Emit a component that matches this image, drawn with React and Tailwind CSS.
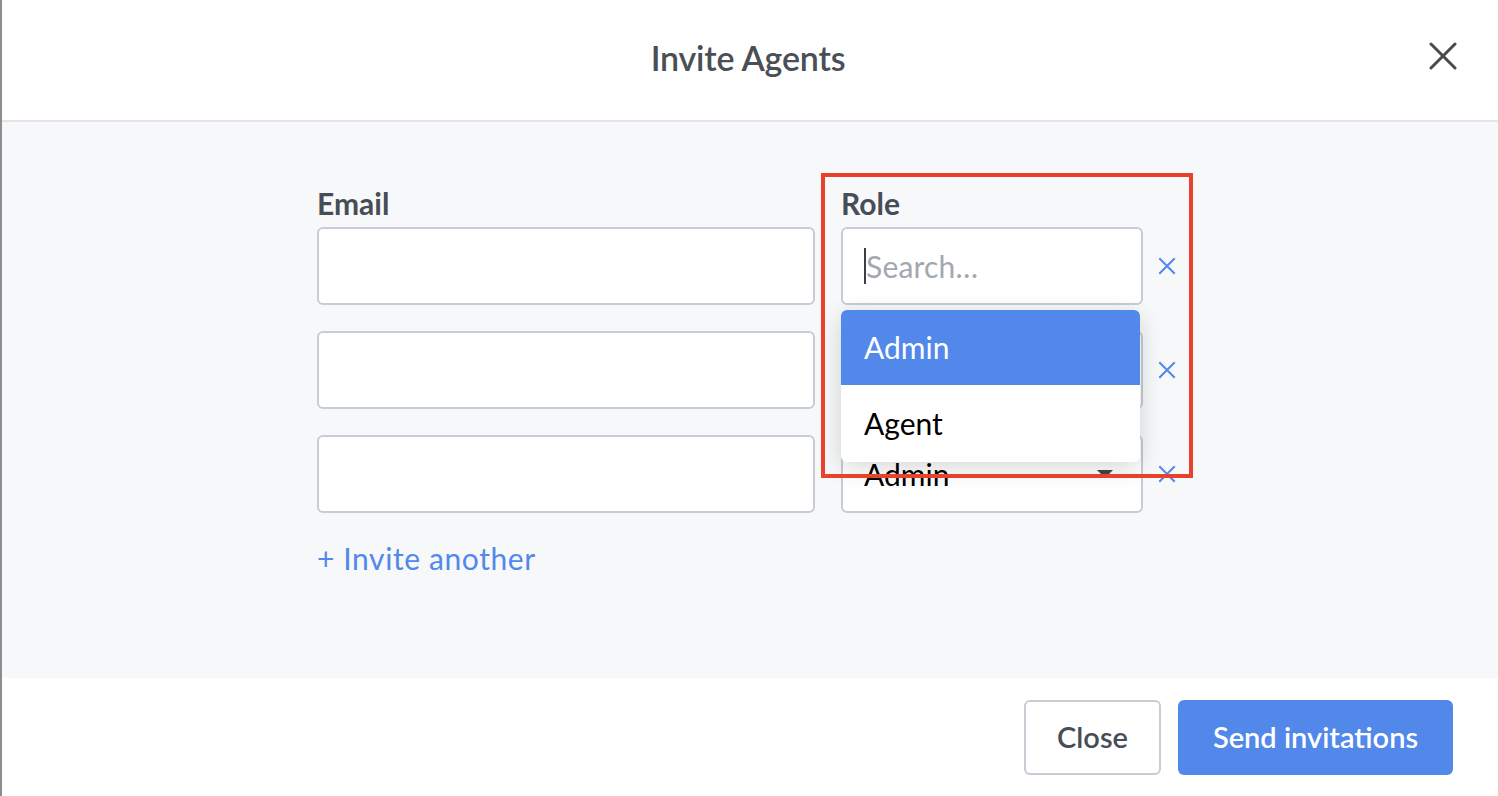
import React from 'react';

const XSmall = () => (
  <svg width="18" height="18" viewBox="0 0 18 18" className="shrink-0">
    <path d="M2 2 L16 16 M16 2 L2 16" stroke="#5288ea" strokeWidth="2" strokeLinecap="square" />
  </svg>
);

const Caret = () => (
  <svg width="16" height="8" viewBox="0 0 16 8">
    <path d="M0 0 H16 L8 8 Z" fill="#3f454d" />
  </svg>
);

const App = () => {
  const rows = [0, 1, 2];

  return (
    <div className="relative w-[1498px] h-[796px] flex flex-col bg-white border-l-2 border-[#8d8d8d] font-['Lato',sans-serif] overflow-hidden">
      <header className="relative h-[122px] shrink-0 flex items-center justify-center border-b-2 border-[#e1e4e8]">
        <h1 className="text-[34px] font-semibold text-[#4a4f57] tracking-[-0.2px] -mt-[6px] pr-[4px]">Invite Agents</h1>
        <button className="absolute right-[41px] top-[42px] p-0">
          <svg width="28" height="28" viewBox="0 0 28 28">
            <path d="M2 2 L26 26 M26 2 L2 26" stroke="#4a4a4a" strokeWidth="3" strokeLinecap="round" />
          </svg>
        </button>
      </header>

      <main className="flex-1 bg-[#f7f8fa] pl-[315px] pt-[64px]">
        <div className="flex gap-[26px]">
          <div className="w-[498px] flex flex-col">
            <label className="text-[30px] font-bold text-[#474d56] leading-[34px] mb-[7px]">Email</label>
            <div className="flex flex-col gap-[26px]">
              {rows.map((r) => (
                <input key={r} className="h-[78px] w-full bg-white border-2 border-[#c6cdd5] rounded-[6px] outline-none" />
              ))}
            </div>
          </div>

          <div className="flex flex-col">
            <label className="text-[30px] font-bold text-[#474d56] leading-[34px] mb-[7px]">Role</label>
            <div className="flex flex-col gap-[26px]">
              {rows.map((r) => (
                <div key={r} className="flex items-center gap-[15px]">
                  <div className="relative w-[302px] h-[78px] bg-white border-2 border-[#c6cdd5] rounded-[6px] flex items-center pl-[21px] pr-[28px]">
                    {r === 0 && (
                      <>
                        <span className="w-[2px] h-[36px] bg-[#3a3f46]" />
                        <span className="text-[30px] text-[#a3a8b0] tracking-[0.2px]">Search…</span>
                        <div className="absolute left-[-2px] top-[81px] w-[299px] z-10 bg-white rounded-[6px] shadow-[0_6px_24px_rgba(0,0,0,0.16)] overflow-hidden">
                          <div className="h-[75px] bg-[#5288ea] text-white text-[30px] flex items-center pl-[23px]">Admin</div>
                          <div className="h-[77px] text-black text-[30px] flex items-center pl-[23px]">Agent</div>
                        </div>
                      </>
                    )}
                    {r > 0 && (
                      <>
                        <span className="flex-1 text-[30px] text-black">Admin</span>
                        <Caret />
                      </>
                    )}
                  </div>
                  <XSmall />
                </div>
              ))}
            </div>
          </div>
        </div>

        <button className="mt-[27px] text-[30px] text-[#5288ea] tracking-[0.6px] leading-[36px]">+ Invite another</button>
      </main>

      <footer className="h-[118px] shrink-0 flex items-center justify-end gap-[17px] pr-[45px]">
        <button className="w-[137px] h-[75px] rounded-[6px] border-2 border-[#c6cdd5] bg-white text-[29px] font-semibold text-[#474d56]">Close</button>
        <button className="w-[275px] h-[75px] rounded-[6px] bg-[#5288ea] text-[29px] font-semibold text-white">Send invitations</button>
      </footer>

      <div className="absolute left-[819px] top-[173px] w-[372px] h-[305px] border-4 border-[#e8412c] z-20 pointer-events-none" />
    </div>
  );
};

export default App;
